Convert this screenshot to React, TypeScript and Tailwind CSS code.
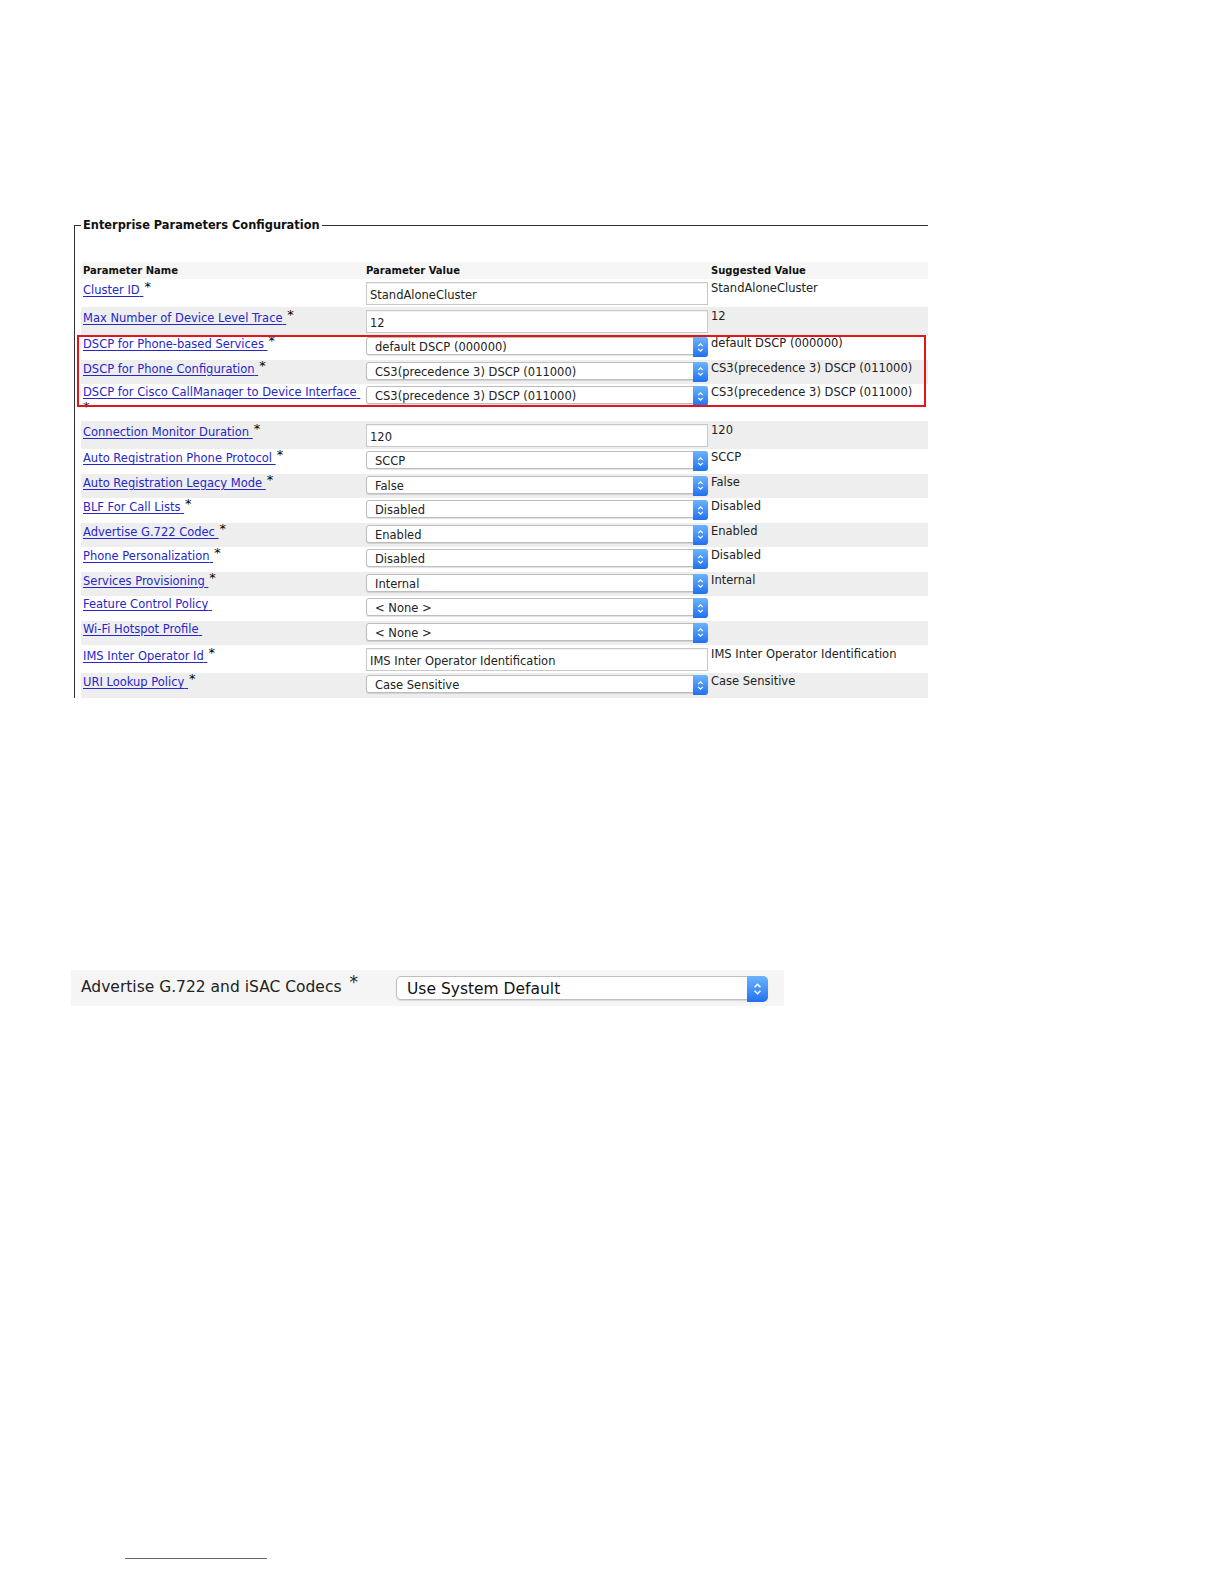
import React from "react";

type Row = {
  name: string;
  star: boolean;
  kind: "input" | "select";
  value: string;
  suggested: string;
};

const rowsTop: Row[] = [
  { name: "Cluster ID", star: true, kind: "input", value: "StandAloneCluster", suggested: "StandAloneCluster" },
  { name: "Max Number of Device Level Trace", star: true, kind: "input", value: "12", suggested: "12" },
];

const rowsDscp: Row[] = [
  { name: "DSCP for Phone-based Services", star: true, kind: "select", value: "default DSCP (000000)", suggested: "default DSCP (000000)" },
  { name: "DSCP for Phone Configuration", star: true, kind: "select", value: "CS3(precedence 3) DSCP (011000)", suggested: "CS3(precedence 3) DSCP (011000)" },
];

const rowsBottom: Row[] = [
  { name: "Connection Monitor Duration", star: true, kind: "input", value: "120", suggested: "120" },
  { name: "Auto Registration Phone Protocol", star: true, kind: "select", value: "SCCP", suggested: "SCCP" },
  { name: "Auto Registration Legacy Mode", star: true, kind: "select", value: "False", suggested: "False" },
  { name: "BLF For Call Lists", star: true, kind: "select", value: "Disabled", suggested: "Disabled" },
  { name: "Advertise G.722 Codec", star: true, kind: "select", value: "Enabled", suggested: "Enabled" },
  { name: "Phone Personalization", star: true, kind: "select", value: "Disabled", suggested: "Disabled" },
  { name: "Services Provisioning", star: true, kind: "select", value: "Internal", suggested: "Internal" },
  { name: "Feature Control Policy", star: false, kind: "select", value: "< None >", suggested: "" },
  { name: "Wi-Fi Hotspot Profile", star: false, kind: "select", value: "< None >", suggested: "" },
  { name: "IMS Inter Operator Id", star: true, kind: "input", value: "IMS Inter Operator Identification", suggested: "IMS Inter Operator Identification" },
  { name: "URI Lookup Policy", star: true, kind: "select", value: "Case Sensitive", suggested: "Case Sensitive" },
];

function Stepper({ big }: { big?: boolean }) {
  return (
    <div
      className={
        big
          ? "flex h-[26px] w-[21px] -my-px -mr-px items-center justify-center rounded-r-[5px] bg-linear-to-b from-[#6cb4fb] to-[#1f70f0]"
          : "flex h-[20px] w-[15px] -my-px -mr-px items-center justify-center rounded-r-[3px] bg-linear-to-b from-[#6cb4fb] to-[#1f70f0]"
      }
    >
      <svg width={big ? 9 : 7} height={big ? 14 : 11} viewBox="0 0 7 11">
        <path d="M1.2 4.2 L3.5 1.8 L5.8 4.2 M1.2 6.8 L3.5 9.2 L5.8 6.8" stroke="white" strokeWidth="1.2" fill="none" />
      </svg>
    </div>
  );
}

function Select({ value }: { value: string }) {
  return (
    <div className="flex h-[18px] w-[342px] rounded-[3px] border border-[#bdbdbd] bg-white shadow-[0_1px_1px_rgba(0,0,0,0.12)]">
      <div className="flex-1 pl-[8px] pt-[3px] text-[11.5px] leading-[13px] text-[#222]">{value}</div>
      <Stepper />
    </div>
  );
}

function TextInput({ value }: { value: string }) {
  return (
    <div className="h-[23px] w-[342px] border border-[#c9c9c9] bg-white pl-[3px] pt-[6px] text-[11.5px] leading-[13px] text-[#222] shadow-[inset_0_1px_1px_rgba(0,0,0,0.06)]">
      {value}
    </div>
  );
}

function NameCell({ name, star, wrapStar }: { name: string; star: boolean; wrapStar?: boolean }) {
  return (
    <div className="w-[283px] pl-[2px] text-[11.5px] leading-[13px]">
      <a className="text-[#2626c9] underline underline-offset-[2px]">
        {name}
        {"\u00a0"}
      </a>
      {star && !wrapStar && <span className="relative -top-[3px] ml-[1px] text-[13px] text-black">*</span>}
      {star && wrapStar && (
        <div className="mt-[1px] text-[13px] leading-[13px] text-black">*</div>
      )}
    </div>
  );
}

function TableRow({ r, gray, wrapStar }: { r: Row; gray: boolean; wrapStar?: boolean }) {
  const isInput = r.kind === "input";
  const h = wrapStar ? "h-[37px]" : isInput ? "h-[28px]" : "h-[24.5px]";
  return (
    <div className={`flex ${h} ${gray ? "bg-[#eeeeee]" : "bg-white"}`}>
      <div className={isInput ? "pt-[4px]" : "pt-[2px]"}>
        <NameCell name={r.name} star={r.star} wrapStar={wrapStar} />
      </div>
      <div className={`${isInput ? "pt-[3px]" : "pt-[2px]"} w-[344px] pl-[2px]`}>
        {isInput ? <TextInput value={r.value} /> : <Select value={r.value} />}
      </div>
      <div className={`${isInput ? "pt-[3px]" : "pt-[2px]"} flex-1 pl-[3px] text-[11.5px] leading-[13px] text-[#222]`}>
        {r.suggested}
      </div>
    </div>
  );
}

export default function App() {
  return (
    <div className="min-h-[1584px] w-[1224px] bg-white font-['DejaVu_Sans',sans-serif] text-black">
      <div className="pl-[74px] pt-[218px]">
        <div className="w-[854px]">
          {/* legend */}
          <div className="flex h-[14px] items-center">
            <div className="h-[7px] w-[7px] self-end border-l border-t border-[#333]" />
            <div className="px-[2px] text-[11.4px] font-bold leading-[14px] text-[#111]">Enterprise Parameters Configuration</div>
            <div className="h-px flex-1 bg-[#333]" />
          </div>
          <div className="border-l border-[#333] pl-[6px] pt-[30px]">
            {/* header */}
            <div className="flex h-[17px] bg-[#f6f6f6] pt-[3px] text-[10px] font-bold leading-[12px] text-[#111]">
              <div className="w-[283px] pl-[2px]">Parameter Name</div>
              <div className="w-[344px] pl-[2px]">Parameter Value</div>
              <div className="flex-1 pl-[3px]">Suggested Value</div>
            </div>
            {rowsTop.map((r, i) => (
              <TableRow key={r.name} r={r} gray={i % 2 === 1} />
            ))}
            <div className="relative">
              {rowsDscp.map((r, i) => (
                <TableRow key={r.name} r={r} gray={i % 2 === 1} />
              ))}
              <TableRow
                r={{
                  name: "DSCP for Cisco CallManager to Device Interface",
                  star: true,
                  kind: "select",
                  value: "CS3(precedence 3) DSCP (011000)",
                  suggested: "CS3(precedence 3) DSCP (011000)",
                }}
                gray={false}
                wrapStar
              />
              <div className="pointer-events-none absolute -left-[4px] right-[2px] top-0 h-[72px] border-2 border-[#e3141b]" />
            </div>
            {rowsBottom.map((r, i) => (
              <TableRow key={r.name} r={r} gray={i % 2 === 0} />
            ))}
          </div>
        </div>
      </div>

      {/* second snippet */}
      <div className="ml-[71px] mt-[272px] flex h-[36px] w-[713px] items-start bg-[#f5f5f5]">
        <div className="w-[325px] pl-[10px] pt-[6px] text-[15.5px] leading-[20px] text-[#222]">
          Advertise G.722 and iSAC Codecs
          <span className="relative -top-[4px] ml-[8px] text-[17px]">*</span>
        </div>
        <div className="pt-[6px]">
          <div className="flex h-[24px] w-[372px] rounded-[5px] border border-[#bdbdbd] bg-white shadow-[0_1px_1px_rgba(0,0,0,0.12)]">
            <div className="flex-1 pl-[10px] pt-[2px] text-[15.5px] leading-[20px] text-[#111]">
              Use System Default
            </div>
            <Stepper big />
          </div>
        </div>
      </div>

      <div className="ml-[125px] mt-[552px] h-px w-[142px] bg-[#666]" />
    </div>
  );
}
